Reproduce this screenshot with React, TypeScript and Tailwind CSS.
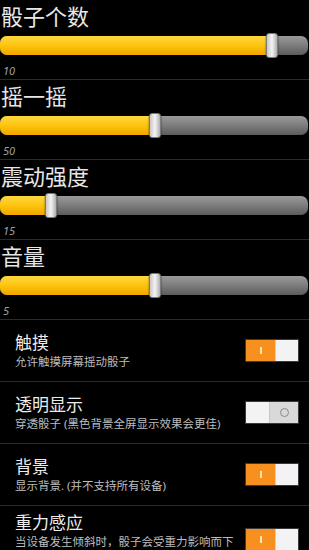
import React from 'react';

const cjk = { fontFamily: '"Noto Sans", "Noto Sans CJK SC", sans-serif' };

interface SliderRowProps {
  title: string;
  value: string;
  thumb: number; // thumb centre, px from the left
}

const SliderRow: React.FC<SliderRowProps> = ({ title, value, thumb }) => (
  <div className="h-[80px] border-b border-[#2a2a2a] flex flex-col">
    <div className="h-[32px] pl-[1px] text-[22px] leading-[32px] text-[#e6e6e6]">{title}</div>
    {/* track */}
    <div className="relative mt-[4px] h-[19px] mr-[1px] rounded-[7px] bg-gradient-to-b from-[#9a9a9a] via-[#7c7c7c] to-[#5c5c5c]">
      <div
        className="absolute left-0 top-0 h-full rounded-l-[7px] bg-gradient-to-b from-[#ffd83a] via-[#fcc40a] to-[#f0a600]"
        style={{ width: thumb }}
      />
      <div
        className="absolute top-[-3px] h-[25px] w-[12px] rounded-[3px] border border-[#7a7a7a] bg-gradient-to-r from-[#c8c8c8] via-[#f4f4f4] to-[#b0b0b0] shadow-[0_1px_2px_rgba(0,0,0,0.6)]"
        style={{ left: thumb - 6 }}
      />
    </div>
    <div className="mt-[8px] h-[16px] pl-[3px] text-[11px] leading-[16px] italic text-[#a0a0a0]" style={{ fontFamily: '"Noto Sans", sans-serif' }}>
      {value}
    </div>
  </div>
);

const Toggle: React.FC<{ on: boolean }> = ({ on }) =>
  on ? (
    <div className="flex h-[23px] w-[54px] shrink-0 overflow-hidden border border-[#3a3a3a]">
      <div className="flex w-[29px] items-center justify-center bg-[#f7901e]">
        <div className="h-[7px] w-[2px] bg-[#ffe6b0]" />
      </div>
      <div className="flex-1 bg-[#f3f3f5] border-l border-[#d0d0d0]" />
    </div>
  ) : (
    <div className="flex h-[23px] w-[54px] shrink-0 overflow-hidden border border-[#3a3a3a]">
      <div className="w-[24px] bg-[#f3f3f3] border-r border-[#c8c8c8]" />
      <div className="flex flex-1 items-center justify-center bg-[#d9d9d9]">
        <div className="h-[9px] w-[9px] rounded-full border-[1.5px] border-[#8a8a8a]" />
      </div>
    </div>
  );

interface ToggleRowProps {
  title: string;
  sub: string;
  on: boolean;
}

const ToggleRow: React.FC<ToggleRowProps> = ({ title, sub, on }) => (
  <div className="flex min-h-[62px] items-center border-b border-[#2a2a2a] pl-[15px] pr-[10px] py-[6px]">
    <div className="flex-1 min-w-0 pr-[10px]">
      <div className="text-[17px] leading-[22px] text-[#ececec]">{title}</div>
      <div className="text-[11.5px] leading-[16px] text-[#bdbdbd]">{sub}</div>
    </div>
    <Toggle on={on} />
  </div>
);

const sliders: SliderRowProps[] = [
  { title: '骰子个数', value: '10', thumb: 272 },
  { title: '摇一摇', value: '50', thumb: 155 },
  { title: '震动强度', value: '15', thumb: 51 },
  { title: '音量', value: '5', thumb: 155 },
];

const toggles: ToggleRowProps[] = [
  { title: '触摸', sub: '允许触摸屏幕摇动骰子', on: true },
  { title: '透明显示', sub: '穿透骰子 (黑色背景全屏显示效果会更佳)', on: false },
  { title: '背景', sub: '显示背景. (并不支持所有设备)', on: true },
  { title: '重力感应', sub: '当设备发生倾斜时，骰子会受重力影响而下落', on: true },
];

export default function App() {
  return (
    <div className="h-[550px] w-[309px] overflow-hidden bg-black" style={cjk}>
      {sliders.map((s) => (
        <SliderRow key={s.title} {...s} />
      ))}
      {toggles.map((t) => (
        <ToggleRow key={t.title} {...t} />
      ))}
    </div>
  );
}
